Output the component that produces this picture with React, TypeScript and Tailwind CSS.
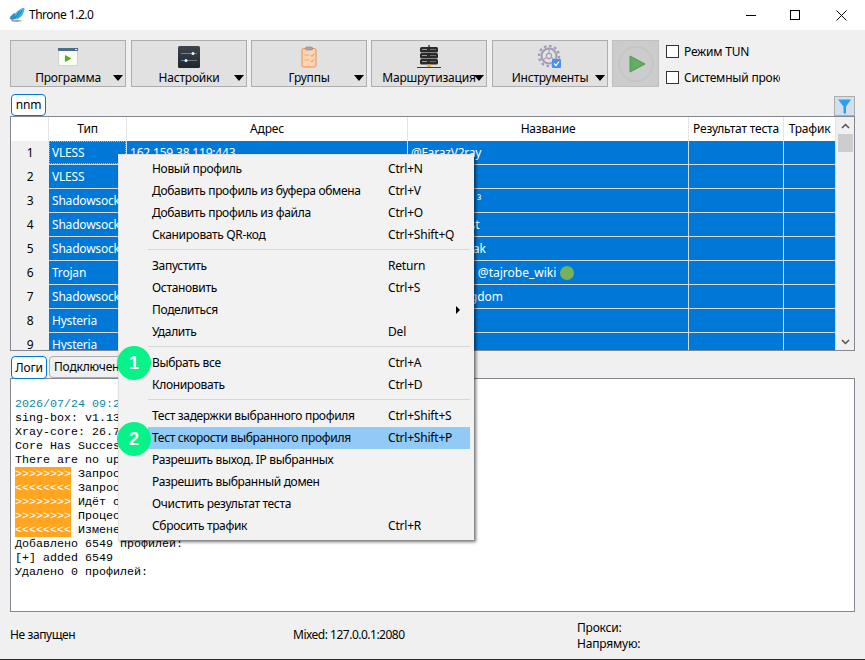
import React from "react";

const rows = [
  ["VLESS", "162.159.38.119:443", "@FarazV2ray"],
  ["VLESS", "104.18.26.90:443", ""],
  ["Shadowsocks", "37.19.198.160:443", "Free server ³"],
  ["Shadowsocks", "185.135.86.11:8080", "@proxy_fast"],
  ["Shadowsocks", "149.22.87.241:443", "@proxy_peak"],
  ["Trojan", "172.67.180.22:443", "Telegram: @tajrobe_wiki"],
  ["Shadowsocks", "45.87.175.65:8080", "United Kingdom"],
  ["Hysteria", "91.107.190.44:443", ""],
  ["Hysteria", "91.107.190.45:443", ""],
];

type MenuRow = { label: string; keys?: string; sub?: boolean; active?: boolean } | "sep";

const menu: MenuRow[] = [
  { label: "Новый профиль", keys: "Ctrl+N" },
  { label: "Добавить профиль из буфера обмена", keys: "Ctrl+V" },
  { label: "Добавить профиль из файла", keys: "Ctrl+O" },
  { label: "Сканировать QR-код", keys: "Ctrl+Shift+Q" },
  "sep",
  { label: "Запустить", keys: "Return" },
  { label: "Остановить", keys: "Ctrl+S" },
  { label: "Поделиться", sub: true },
  { label: "Удалить", keys: "Del" },
  "sep",
  { label: "Выбрать все", keys: "Ctrl+A" },
  { label: "Клонировать", keys: "Ctrl+D" },
  "sep",
  { label: "Тест задержки выбранного профиля", keys: "Ctrl+Shift+S" },
  { label: "Тест скорости выбранного профиля", keys: "Ctrl+Shift+P", active: true },
  { label: "Разрешить выход. IP выбранных" },
  { label: "Разрешить выбранный домен" },
  { label: "Очистить результат теста" },
  { label: "Сбросить трафик", keys: "Ctrl+R" },
];

const logPlain = [
  "sing-box: v1.13.0",
  "Xray-core: 26.7.11",
  "Core Has Successfully Started",
  "There are no updates",
];

const logMarked = [
  [">>>>>>>>", "Запрос обновления"],
  ["<<<<<<<<", "Запрос завершён"],
  [">>>>>>>>", "Идёт обновление"],
  [">>>>>>>>", "Процесс завершён"],
  ["<<<<<<<<", "Изменения группы"],
];

function ProgramIcon() {
  return (
    <svg width="22" height="20" viewBox="0 0 22 20">
      <rect x="1.5" y="1.5" width="19" height="17" fill="#fbfbf6" stroke="#d5d5cf" />
      <rect x="1" y="1" width="20" height="3" fill="#4d6d8c" />
      <rect x="18" y="2" width="2" height="1" fill="#dfe6ee" />
      <path d="M8 8 L14.5 11.5 L8 15 Z" fill="#57ad1c" />
    </svg>
  );
}

function SettingsIcon() {
  return (
    <svg width="22" height="22" viewBox="0 0 22 22">
      <defs>
        <linearGradient id="settingsBg" x1="0" y1="0" x2="0" y2="1">
          <stop offset="0" stopColor="#3d464e" />
          <stop offset="1" stopColor="#20262b" />
        </linearGradient>
      </defs>
      <rect x="0" y="0" width="22" height="22" rx="1.5" fill="url(#settingsBg)" />
      <rect x="3" y="7" width="16" height="1" fill="#6d767e" />
      <rect x="3" y="7" width="12" height="1" fill="#3d8fe0" />
      <circle cx="15" cy="7.5" r="1.5" fill="#f4f6f8" />
      <rect x="3" y="14" width="16" height="1" fill="#6d767e" />
      <rect x="3" y="14" width="5" height="1" fill="#3d8fe0" />
      <circle cx="8" cy="14.5" r="1.5" fill="#f4f6f8" />
    </svg>
  );
}

function GroupsIcon() {
  return (
    <svg width="16" height="22" viewBox="0 0 16 22">
      <rect x="1" y="2.5" width="14" height="18.5" rx="1.5" fill="#fbd5b4" stroke="#ee8f45" />
      <rect x="4.5" y="1" width="7" height="3" rx="1" fill="#a9a3b5" stroke="#8b8598" strokeWidth="0.6" />
      <path d="M3.5 9 H8 M3.5 14 H8" stroke="#e9a873" />
      <path d="M9.5 9 L11 10.5 L13 7.5 M9.5 14.5 L11 16 L13 13" stroke="#ee9a55" fill="none" />
    </svg>
  );
}

function RoutingIcon() {
  return (
    <svg width="24" height="24" viewBox="0 0 24 24">
      <rect x="11" y="0" width="2" height="2" fill="#77604a" />
      <rect x="3" y="2" width="18" height="5.5" rx="1.5" fill="#2a2a2a" />
      <rect x="3" y="8" width="18" height="5.5" rx="1.5" fill="#2a2a2a" />
      <rect x="3" y="14" width="18" height="5.5" rx="1.5" fill="#2a2a2a" />
      <path d="M5 4.5 H10 M5 10.5 H10 M5 16.5 H10" stroke="#9a9a9a" />
      <path d="M13 4.5 H19 M13 10.5 H19 M13 16.5 H19" stroke="#6d6d6d" />
      <rect x="10" y="19.5" width="4" height="2.5" fill="#e1b93a" />
      <rect x="0" y="22" width="24" height="1" fill="#3a3a3a" />
    </svg>
  );
}

function ToolsIcon() {
  return (
    <svg width="24" height="24" viewBox="0 0 24 24">
      <circle cx="11" cy="11" r="7.5" fill="none" stroke="#a19db6" strokeWidth="2" />
      <circle cx="11" cy="11" r="10" fill="none" stroke="#a19db6" strokeWidth="2.4" strokeDasharray="2.6 2.6" />
      <circle cx="11" cy="11" r="2.6" fill="none" stroke="#a19db6" strokeWidth="1.1" />
      <path d="M11 8.4 V3.5 M8.8 12.4 L4.8 15 M13.2 12.4 L17 15" stroke="#a19db6" strokeWidth="1.1" />
      <rect x="14" y="14" width="9" height="9" rx="1" fill="#4a90ee" />
      <path d="M16 18.5 L18 20.5 L21 16.5" stroke="#fff" strokeWidth="1.2" fill="none" />
    </svg>
  );
}

function ToolButton({ label, icon }: { label: string; icon: React.ReactNode }) {
  return (
    <div className="relative w-[116px] h-[47px] border border-[#adadad] bg-[#e1e1e1] flex flex-col items-center">
      <div className="h-[27px] mt-[2px] flex items-center justify-center">{icon}</div>
      <div className="mt-auto leading-[16px] whitespace-nowrap">{label}</div>
      <div className="absolute right-[2px] bottom-[5px] w-0 h-0 border-x-[5.5px] border-x-transparent border-t-[6px] border-t-black" />
    </div>
  );
}

function Check({ label }: { label: string }) {
  return (
    <div className="flex items-center h-[13px]">
      <div className="w-[13px] h-[13px] border border-[#333333] bg-white shrink-0" />
      <div className="ml-[5px] w-[96px] overflow-hidden whitespace-nowrap leading-[16px]">{label}</div>
    </div>
  );
}

export default function App() {
  return (
    <div className="relative w-[865px] h-[660px] overflow-hidden flex flex-col bg-[#f0f0f0] text-[12px] text-black font-['Noto_Sans',sans-serif] tracking-[-0.2px]">
      {/* title bar */}
      <div className="h-[30px] bg-white flex items-center shrink-0">
        <svg className="ml-[9px]" width="16" height="16" viewBox="0 0 16 16">
          <path d="M2 13 L8 12.5 L14 14 L8 15 L3 14.5 Z" fill="#a3a3a3" />
          <path d="M0.5 11.5 C2 8 4 6.5 6.5 6 L7.5 11.5 L3 13 Z" fill="#2f8fcc" />
          <path d="M6 7 C8 4 11 1.5 15.5 0.5 C15.5 5 13.5 10 8.5 12 L7 11.5 Z" fill="#43b6e8" />
          <path d="M6.5 10.5 L10.5 4.5 M8 11 L13 3.5" stroke="#1d5f8f" strokeWidth="0.7" />
        </svg>
        <span className="ml-[4px] tracking-[-0.5px]">Throne 1.2.0</span>
        <div className="ml-auto flex items-center h-full">
          <div className="w-[10px] h-[1px] bg-black mr-[34px]" />
          <div className="w-[10px] h-[10px] border border-black mr-[36px]" />
          <svg className="mr-[18px]" width="11" height="11" viewBox="0 0 11 11">
            <path d="M0.5 0.5 L10.5 10.5 M10.5 0.5 L0.5 10.5" stroke="#000" strokeWidth="1" />
          </svg>
        </div>
      </div>

      <div className="flex-1 flex flex-col pl-[10px] pr-[10px]">
        {/* toolbar */}
        <div className="flex mt-[10px] shrink-0">
          <ToolButton label="Программа" icon={<ProgramIcon />} />
          <div className="w-[5px]" />
          <ToolButton label="Настройки" icon={<SettingsIcon />} />
          <div className="w-[4px]" />
          <ToolButton label="Группы" icon={<GroupsIcon />} />
          <div className="w-[4px]" />
          <ToolButton label="Маршрутизация" icon={<RoutingIcon />} />
          <div className="w-[5px]" />
          <ToolButton label="Инструменты" icon={<ToolsIcon />} />
          <div className="ml-[4px] w-[47px] h-[47px] border border-[#bfbfbf] bg-[#cccccc] flex items-center justify-center">
            <svg width="38" height="38" viewBox="0 0 38 38">
              <circle cx="19" cy="19" r="17" fill="none" stroke="#c6c6c6" strokeWidth="2" />
              <path d="M13 11 L28 19 L13 27 Z" fill="#62ad62" stroke="#4f9a58" strokeWidth="1" />
            </svg>
          </div>
          <div className="ml-[7px] flex flex-col pt-[5px] gap-[13px]">
            <Check label="Режим TUN" />
            <Check label="Системный прокси" />
          </div>
        </div>

        {/* profile tabs */}
        <div className="flex mt-[7px] h-[22px] shrink-0 relative z-10">
          <div className="ml-[1px] w-[35px] h-[22px] border border-[#0078d7] rounded-[4px] bg-white flex items-center justify-center">
            nnm
          </div>
          <div className="ml-auto mt-[2px] w-[21px] h-[20px] border border-[#adadad] bg-[#d0e0ee] flex items-center justify-center">
            <svg width="13" height="15" viewBox="0 0 13 15">
              <path d="M0 0.5 H13 L8 7.5 V14.5 H5.5 V7.5 Z" fill="#2f9df0" />
            </svg>
          </div>
        </div>

        {/* profile table */}
        <div className="h-[235px] border border-[#828790] bg-white flex overflow-hidden shrink-0">
          <div className="w-[825px] flex flex-col">
            <div className="grid grid-cols-[38px_78px_281px_281px_95px_52px] h-[24px] shrink-0 text-center leading-[24px] bg-white">
              {["", "Тип", "Адрес", "Название", "Результат теста", "Трафик"].map((h, i) => (
                <div key={i} className="border-r border-[#e5e5e5] whitespace-nowrap overflow-hidden">
                  {h}
                </div>
              ))}
            </div>
            {rows.map((r, i) => (
              <div
                key={i}
                className="grid grid-cols-[38px_78px_281px_281px_95px_52px] h-[24px] shrink-0 leading-[23px]"
              >
                <div className="bg-[#f0f0f0] text-center">{i + 1}</div>
                <div className="bg-[#0078d7] text-white border-r border-b border-[#d9d9d9] pl-[3px] whitespace-nowrap overflow-hidden relative">
                  {r[0]}
                  {i === 0 && (
                    <div className="absolute left-0 top-0 right-0 bottom-0 border border-dotted border-[#f0a050]" />
                  )}
                </div>
                <div className="bg-[#0078d7] text-white border-r border-b border-[#d9d9d9] pl-[3px] whitespace-nowrap overflow-hidden">
                  {r[1]}
                </div>
                <div
                  className={`bg-[#0078d7] text-white border-r border-b border-[#d9d9d9] whitespace-nowrap overflow-hidden flex items-center h-[24px] ${
                    i === 0 ? "pl-[3px]" : i === 5 ? "pl-[11px] tracking-normal" : "pl-[3px] tracking-normal"
                  }`}
                >
                  {r[2]}
                  {i === 5 && <span className="ml-[4px] w-[14px] h-[14px] rounded-full bg-[#78b159]" />}
                </div>
                <div className="bg-[#0078d7] border-r border-b border-[#d9d9d9]" />
                <div className="bg-[#0078d7] border-r border-b border-[#d9d9d9]" />
              </div>
            ))}
          </div>
          {/* scrollbar */}
          <div className="w-[18px] bg-[#f0f0f0] flex flex-col items-center shrink-0">
            <svg className="mt-[6px]" width="9" height="6" viewBox="0 0 9 6">
              <path d="M1 5 L4.5 1.5 L8 5" fill="none" stroke="#505050" strokeWidth="1.5" />
            </svg>
            <div className="mt-[5px] w-[15px] h-[18px] bg-[#cdcdcd]" />
            <svg className="mt-auto mb-[5px]" width="9" height="6" viewBox="0 0 9 6">
              <path d="M1 1 L4.5 4.5 L8 1" fill="none" stroke="#505050" strokeWidth="1.5" />
            </svg>
          </div>
        </div>

        {/* log tabs */}
        <div className="flex mt-[5px] h-[22px] shrink-0 relative z-10">
          <div className="ml-[1px] w-[36px] h-[23px] border border-[#0078d7] rounded-[4px] bg-white flex items-center justify-center">
            Логи
          </div>
          <div className="ml-[2px] w-[90px] h-[22px] border border-[#adadad] rounded-[4px] bg-[#f0f0f0] pl-[4px] leading-[20px]">
            Подключения
          </div>
        </div>

        {/* log output */}
        <div className="h-[234px] border border-[#828790] bg-white pt-[4px] pl-[4px] font-['Liberation_Mono',monospace] text-[11.67px] leading-[14px] tracking-normal shrink-0">
          <div className="h-[14px]" />
          <div className="text-[#0a8aa8]">2026/07/24 09:27:13</div>
          {logPlain.map((l) => (
            <div key={l}>{l}</div>
          ))}
          {logMarked.map(([mark, text], i) => (
            <div key={i} className="flex h-[14px]">
              <span className="bg-[#ffa51f] text-white">{mark}</span>
              <span className="ml-[7px]">{text}</span>
            </div>
          ))}
          <div>Добавлено 6549 профилей:</div>
          <div>[+] added 6549</div>
          <div>Удалено 0 профилей:</div>
        </div>

        {/* status */}
        <div className="flex-1 flex items-center">
          <div className="w-[283px] mt-[-1px] tracking-[-0.4px]">Не запущен</div>
          <div className="w-[284px] mt-[-1px] tracking-[-0.5px]">Mixed: 127.0.0.1:2080</div>
          <div className="flex flex-col leading-[16px]">
            <div>Прокси:</div>
            <div>Напрямую:</div>
          </div>
        </div>
      </div>
      <div className="h-[1px] bg-[#2e2a28] shrink-0" />

      {/* context menu */}
      <div className="absolute z-20 left-[118px] top-[154px] w-[356px] h-[386px] bg-[#f2f2f2] border-t border-l border-[#e2e2e2] pt-[3px] shadow-[2px_2px_3px_rgba(0,0,0,0.55)]">
        {menu.map((m, i) =>
          m === "sep" ? (
            <div key={i} className="h-[9px] pt-[3px] ml-[29px] mr-[4px]">
              <div className="h-[1px] bg-[#d7d7d7]" />
            </div>
          ) : (
            <div
              key={i}
              className={`relative h-[22px] ml-[29px] mr-[4px] pl-[4px] flex items-center ${m.active ? "bg-[#91c9f7]" : ""}`}
            >
              <span className="w-[236px] whitespace-nowrap tracking-[-0.33px]">{m.label}</span>
              {m.keys && <span>{m.keys}</span>}
              {m.sub && (
                <div className="absolute left-[308px] top-[7px] w-0 h-0 border-y-[4px] border-y-transparent border-l-[4px] border-l-black" />
              )}
            </div>
          ),
        )}
        <div className="absolute left-[-2px] top-[191px] w-[34px] h-[34px] rounded-full bg-[#07f389] text-white flex items-center justify-center font-['Liberation_Sans',sans-serif] font-bold text-[18px] tracking-normal">
          1
        </div>
        <div className="absolute left-[-2px] top-[267px] w-[34px] h-[34px] rounded-full bg-[#07f389] text-white flex items-center justify-center font-['Liberation_Sans',sans-serif] font-bold text-[18px] tracking-normal">
          2
        </div>
      </div>
    </div>
  );
}
